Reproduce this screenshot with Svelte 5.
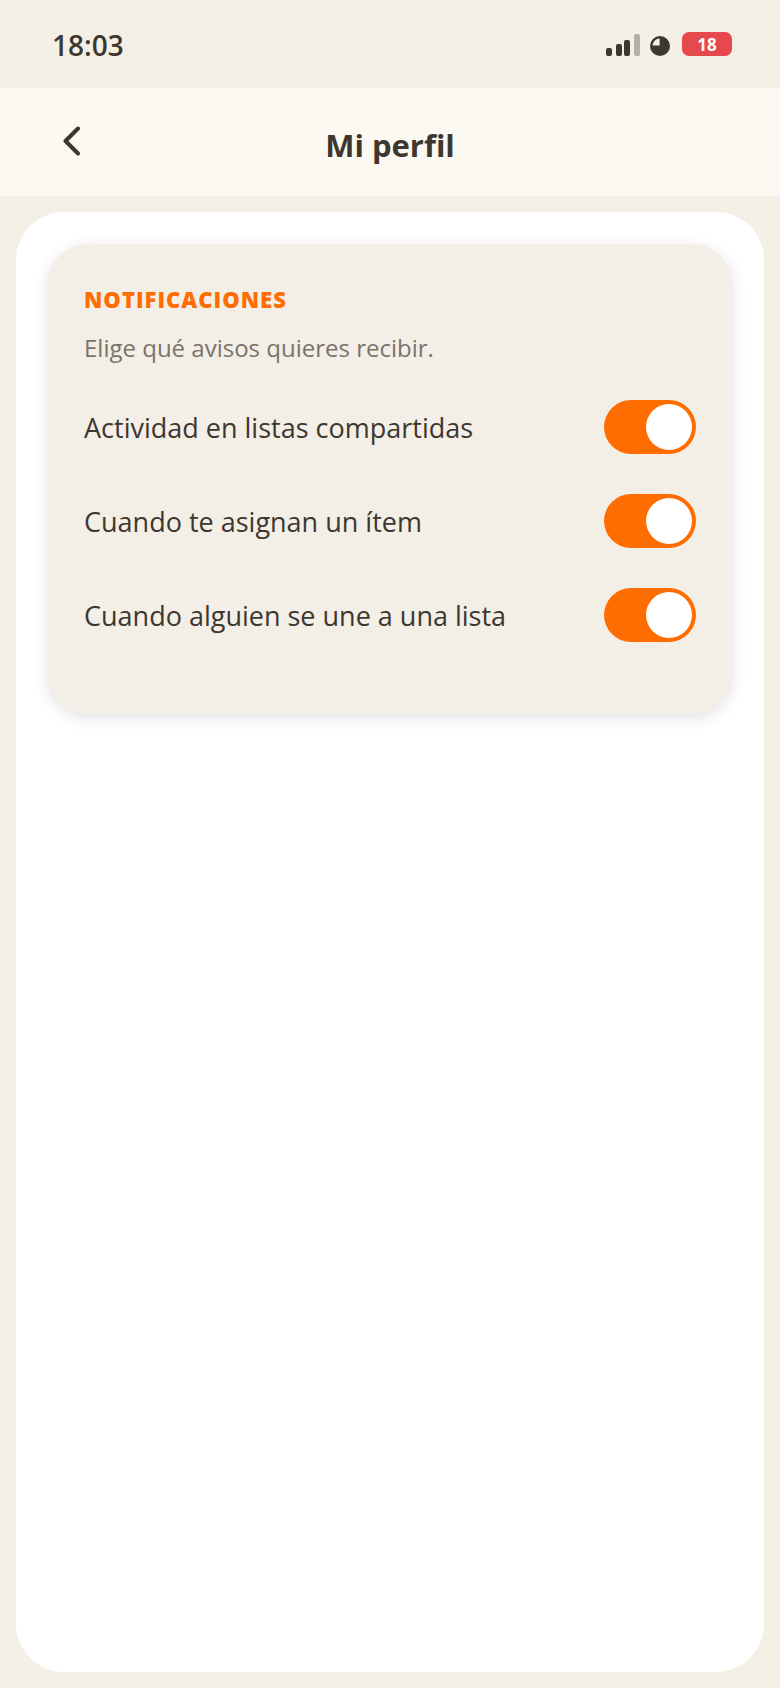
<script>
  let options = $state([
    { id: 'shared', label: 'Actividad en listas compartidas', on: true },
    { id: 'assigned', label: 'Cuando te asignan un ítem', on: true },
    { id: 'joined', label: 'Cuando alguien se une a una lista', on: true }
  ]);
</script>

<div class="screen">
  <div class="status">
    <span class="time">18:03</span>
    <div class="indicators">
      <svg class="signal" viewBox="0 0 34 22" aria-hidden="true">
        <rect x="0" y="14" width="6" height="8" rx="2" />
        <rect x="10" y="10" width="6" height="12" rx="2" />
        <rect x="18" y="6" width="6" height="16" rx="2" />
        <rect class="off" x="28" y="0" width="6" height="22" rx="2" />
      </svg>
      <svg class="dial" viewBox="0 0 20 20" aria-hidden="true">
        <circle cx="10" cy="10" r="10" />
        <path class="slice" d="M9.6 9.6H2.6A7 7 0 0 1 9.6 2.6Z" />
      </svg>
      <span class="battery">18</span>
    </div>
  </div>

  <header>
    <button class="back" type="button" aria-label="Volver">
      <svg viewBox="0 0 18 30" aria-hidden="true"><path d="M15 2.500L2.500 15L15 27.500" /></svg>
    </button>
    <h1>Mi perfil</h1>
  </header>

  <main>
    <section>
      <h2>Notificaciones</h2>
      <p>Elige qué avisos quieres recibir.</p>
      {#each options as option (option.id)}
        <div class="row">
          <label for={option.id}>{option.label}</label>
          <input id={option.id} type="checkbox" role="switch" bind:checked={option.on} />
        </div>
      {/each}
    </section>
  </main>
</div>

<style>
  :global(body) {
    margin: 0;
    background: #f5f0e6;
  }
  * {
    box-sizing: border-box;
  }
  .screen {
    display: flex;
    flex-direction: column;
    min-height: 100vh;
    background: #f5f0e6;
    color: #3d3730;
    font-family: "Segoe UI", "Open Sans", "Noto Sans", sans-serif;
  }
  .status {
    display: flex;
    align-items: center;
    justify-content: space-between;
    height: 88px;
    padding: 0 48px 0 52px;
  }
  .time {
    padding-top: 2px;
    font-size: 28px;
    line-height: 40px;
    font-weight: 600;
  }
  .indicators {
    display: flex;
    align-items: flex-end;
  }
  .signal {
    width: 34px;
    height: 22px;
    margin-right: 10px;
    fill: #3d3730;
  }
  .off {
    fill: #b5aea6;
  }
  .dial {
    width: 20px;
    height: 20px;
    margin-right: 12px;
    fill: #3d3730;
  }
  .dial .slice {
    fill: #f5f0e6;
  }
  .battery {
    width: 50px;
    padding-top: 2px;
    border-radius: 7px;
    background: #e5484d;
    color: #fff;
    font-size: 17px;
    line-height: 22px;
    font-weight: 700;
    text-align: center;
  }
  header {
    display: grid;
    grid-template-columns: 1fr auto 1fr;
    align-items: center;
    height: 108px;
    padding: 6px 40px 0;
    background: #fcf9f2;
  }
  .back {
    display: grid;
    place-items: center;
    width: 64px;
    height: 64px;
    padding: 0 0 8px;
    border: 0;
    background: none;
  }
  .back svg {
    width: 18px;
    height: 30px;
    fill: none;
    stroke: #3d3730;
    stroke-width: 4;
    stroke-linecap: round;
    stroke-linejoin: round;
  }
  h1 {
    margin: 0;
    font-size: 31px;
    line-height: 40px;
    font-weight: 700;
  }
  main {
    flex: 1;
    margin: 16px;
    padding: 32px;
    border-radius: 48px;
    background: #fff;
  }
  section {
    padding: 36px 36px 52px;
    border-radius: 40px;
    background: #f3eee6;
    box-shadow: 0 4px 16px rgba(0, 0, 0, 0.12);
  }
  h2 {
    margin: 0;
    color: #ff6d00;
    font-size: 22px;
    line-height: 38px;
    font-weight: 800;
    letter-spacing: 1px;
    text-transform: uppercase;
  }
  p {
    margin: 12px 0 14px;
    color: #7a736a;
    font-size: 24px;
    line-height: 36px;
  }
  .row {
    display: flex;
    align-items: center;
    justify-content: space-between;
    gap: 24px;
    min-height: 94px;
  }
  label {
    padding-top: 2px;
    font-size: 27px;
    line-height: 36px;
  }
  input {
    appearance: none;
    flex: none;
    width: 92px;
    height: 54px;
    margin: 0;
    padding: 4px;
    border-radius: 27px;
    background: #cfc8bd;
    cursor: pointer;
  }
  input::before {
    content: "";
    display: block;
    width: 46px;
    height: 46px;
    border-radius: 50%;
    background: #fff;
  }
  input:checked {
    background: #ff6d00;
  }
  input:checked::before {
    margin-left: auto;
  }
</style>
